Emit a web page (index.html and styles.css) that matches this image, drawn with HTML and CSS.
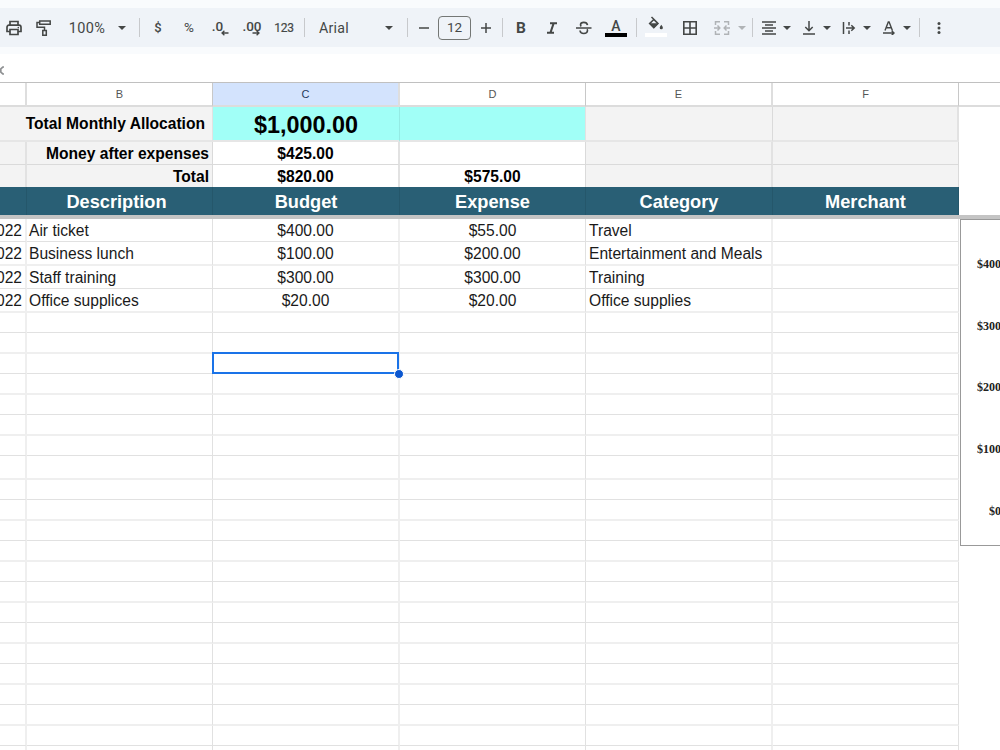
FILE: index.html
```
<!DOCTYPE html>
<html lang="en">
<head>
<meta charset="utf-8">
<title>Budget sheet</title>
<link rel="stylesheet" href="styles.css">
</head>
<body>
<div class="app">
  <header class="top">
    <div class="toolbar">
      <span class="tool w27"><svg width="18" height="18" viewBox="0 0 18 18"><path d="M5 6V2.500h8V6M5 12.500H2V8.300Q2 6.200 4 6.200h10q2 0 2 2.100v4.200h-3M5 10.500h8v5H5z" fill="none" stroke="#444746" stroke-width="1.700"/><circle cx="13.300" cy="8.600" r=".8" fill="#444746"/></svg></span>
      <span class="tool w34"><svg width="18" height="18" viewBox="0 0 18 18"><path d="M4.700 1.900h10.500v3.400H4.700zM4.700 3.600H2v4.700h7.500v3" fill="none" stroke="#444746" stroke-width="1.500"/><path d="M7.800 11.500h3.500v4.700H7.800z" fill="none" stroke="#444746" stroke-width="1.500"/></svg></span>
      <span class="tool w52 zoom">100%</span>
      <span class="tool w18"><i class="caret"></i></span>
      <span class="tool w16"><i class="sep"></i></span>
      <span class="tool w22 money">$</span>
      <span class="tool w40 pct">%</span>
      <span class="tool w22 dec">.0<svg class="below" width="8" height="6" viewBox="0 0 8 6"><path d="M7.500 3H1M3.400.7L1 3l2.400 2.300" fill="none" stroke="#444746" stroke-width="1.300"/></svg></span>
      <span class="tool w42 dec">.00<svg class="below far" width="8" height="6" viewBox="0 0 8 6"><path d="M.5 3H7M4.600.7L7 3 4.600 5.300" fill="none" stroke="#444746" stroke-width="1.300"/></svg></span>
      <span class="tool w22 num">123</span>
      <span class="tool w18"><i class="sep"></i></span>
      <span class="tool w42 fontname">Arial</span>
      <span class="tool w18 caret-far"><i class="caret"></i></span>
      <span class="tool w19"><i class="sep"></i></span>
      <span class="tool w14"><svg width="12" height="12"><path d="M1 6h10" stroke="#444746" stroke-width="1.500"/></svg></span>
      <span class="tool size">12</span>
      <span class="tool w16"><svg width="12" height="12"><path d="M1 6h10M6 1v10" stroke="#444746" stroke-width="1.500"/></svg></span>
      <span class="tool w17"><i class="sep"></i></span>
      <span class="tool w20 bold">B</span>
      <span class="tool w42"><svg width="12" height="14" viewBox="0 0 12 14"><path d="M4 2.200h7M1 11.800h7M7.700 2.200L4.400 11.800" fill="none" stroke="#444746" stroke-width="2"/></svg></span>
      <span class="tool w22"><svg width="18" height="16" viewBox="0 0 18 16"><path d="M1 8h15.500M12.500 5.200Q12 2.400 8.800 2.400T5.500 4.800q0 1 .8 1.600M5 10.500q.3 3 3.800 3t3.700-2.700q0-.9-.5-1.500" fill="none" stroke="#444746" stroke-width="1.600"/></svg></span>
      <span class="tool color-tool"><span class="letter">A</span><i class="swatch black"></i></span>
      <span class="tool w9"><i class="sep"></i></span>
      <span class="tool w30 fill-tool"><svg width="18" height="16" viewBox="0 0 18 16"><path d="M4.500 1l6.400 6.200M6.800 3.500L2.600 7.600l4.200 4.200 4.200-4.200z" fill="none" stroke="#444746" stroke-width="1.500"/><path d="M2.500 7.300h9l-4.700 5zM14.300 8.800q-1.600 2-1.600 2.900a1.600 1.600 0 0 0 3.200 0q0-.9-1.600-2.900z" fill="#444746"/></svg><i class="swatch white"></i></span>
      <span class="tool w37"><svg width="14" height="14"><path d="M.8.800h12.400v12.400H.8zM7 1v12M1 7h12" fill="none" stroke="#444746" stroke-width="1.600"/></svg></span>
      <span class="tool w28"><svg width="16" height="16" viewBox="0 0 16 16"><path d="M6 1.700H1.500V5M10 1.700h4.500V5M6 14.300H1.500V11M10 14.300h4.500V11M0 8h5.500M3.500 5.600L5.800 8l-2.300 2.400M16 8h-5.500M12.500 5.600L10.200 8l2.300 2.400" fill="none" stroke="#b0b3b6" stroke-width="1.500"/></svg></span>
      <span class="tool w12"><i class="caret faded"></i></span>
      <span class="tool w9"><i class="sep"></i></span>
      <span class="tool w24"><svg width="14" height="14"><path d="M0 1h14M3 4h8M0 7h14M3 10h8M0 13h14" stroke="#444746" stroke-width="1.500"/></svg></span>
      <span class="tool w12"><i class="caret"></i></span>
      <span class="tool w24 gap"><svg width="14" height="14"><path d="M1 13h12M7 0v9.500M3.300 6L7 9.700 10.700 6" fill="none" stroke="#444746" stroke-width="1.500"/></svg></span>
      <span class="tool w12"><i class="caret"></i></span>
      <span class="tool w24 gap"><svg width="14" height="14"><path d="M1.500 1v12M7 1v3.500M7 9.500V13M4 7h8M9.300 4.200L12.200 7 9.300 9.800" fill="none" stroke="#444746" stroke-width="1.500"/></svg></span>
      <span class="tool w12"><i class="caret"></i></span>
      <span class="tool w24 gap"><svg width="14" height="14"><path d="M3 9.500L6.300 1h.8l3.300 8.500M4.200 6.800h5M1 12h11M9.700 9.700L12 12l-2.300 2.300" fill="none" stroke="#444746" stroke-width="1.400"/></svg></span>
      <span class="tool w12"><i class="caret"></i></span>
      <span class="tool w13"><i class="sep"></i></span>
      <span class="tool w26"><svg width="4" height="14"><circle cx="2" cy="2.500" r="1.500" fill="#444746"/><circle cx="2" cy="7" r="1.500" fill="#444746"/><circle cx="2" cy="11.500" r="1.500" fill="#444746"/></svg></span>
    </div>
  </header>
  <div class="formula"><svg width="5" height="9" viewBox="0 0 5 9"><path d="M4 1H2.800L.8 2.800v3.400L2.800 8H4" fill="none" stroke="#8f9193" stroke-width="1.700"/></svg></div>
  <main class="sheet">
    <div class="row heads"><b></b><b>B</b><b class="on">C</b><b>D</b><b>E</b><b>F</b><b></b></div>
    <div class="row soft h35 summary first"><b class="merged">Total Monthly Allocation</b><b class="cyan big">$1,000.00</b><b class="cyan"></b><b></b><b></b></div>
    <div class="row h23 summary"><b></b><b class="end">Money after expenses</b><b class="clear">$425.00</b><b class="clear"></b><b></b><b></b></div>
    <div class="row h22 summary last"><b></b><b class="end">Total</b><b class="clear">$820.00</b><b class="clear">$575.00</b><b></b><b></b></div>
    <div class="row titles"><b></b><b class="desc">Description</b><b>Budget</b><b>Expense</b><b>Category</b><b>Merchant</b></div>
    <div class="freeze"></div>
    <div class="row h23 data"><b>022</b><b>Air ticket</b><b>$400.00</b><b>$55.00</b><b>Travel</b><b></b></div>
    <div class="row soft h24 data"><b>022</b><b>Business lunch</b><b>$100.00</b><b>$200.00</b><b>Entertainment and Meals</b><b></b></div>
    <div class="row h23 data"><b>022</b><b>Staff training</b><b>$300.00</b><b>$300.00</b><b>Training</b><b></b></div>
    <div class="row soft h24 data"><b>022</b><b>Office supplices</b><b>$20.00</b><b>$20.00</b><b>Office supplies</b><b></b></div>
    <div id="blank"></div>
    <div class="selection"><i></i></div>
    <aside class="chart"><span>$400</span><span>$300</span><span>$200</span><span>$100</span><span class="zero">$0</span></aside>
  </main>
</div>
<script src="rows.js"></script>
</body>
</html>
```
FILE: styles.css
```
* { box-sizing: border-box; }
body { margin: 0; background: #fff; font-family: "Liberation Sans", Arial, sans-serif; }
.app { width: 1000px; height: 750px; overflow: hidden; }
.top { height: 54px; padding: 8px 0 7px; background: #f9fbfd; }
.toolbar { display: flex; align-items: center; height: 39px; background: #eff3f8; color: #444746; font-family: Roboto, sans-serif; font-weight: 500; }
.tool { display: flex; align-items: center; justify-content: center; flex: none; height: 39px; position: relative; white-space: nowrap; }
.tool svg { display: block; flex: none; }
.w9 { width: 9px; } .w12 { width: 12px; } .w13 { width: 13px; } .w14 { width: 14px; }
.w16 { width: 16px; } .w17 { width: 17px; } .w18 { width: 18px; } .w19 { width: 19px; }
.w20 { width: 20px; } .w22 { width: 22px; } .w24 { width: 24px; } .w26 { width: 26px; }
.w27 { width: 27px; } .w28 { width: 28px; } .w30 { width: 30px; } .w34 { width: 34px; }
.w37 { width: 37px; } .w40 { width: 40px; } .w42 { width: 42px; } .w52 { width: 52px; }
.gap { margin-left: 4px; }
.caret-far { margin-left: 25px; }
.caret { border: 4px solid transparent; border-top-color: #444746; border-bottom: 0; }
.caret.faded { border-top-color: #b0b3b6; }
.sep { width: 1px; height: 19px; background: #c7c9cc; }
.zoom { font-size: 14.5px; font-weight: 400; letter-spacing: .4px; padding-top: 2px; }
.money { font-size: 13px; padding-bottom: 1px; }
.pct { font-size: 13.5px; font-weight: 400; padding-bottom: 1px; }
.dec { font-size: 13.5px; padding-bottom: 4px; }
.w22.dec { padding-right: 5px; }
.below { position: absolute; left: 12px; top: 22px; }
.below.far { left: 21px; }
.num { font-size: 12px; font-weight: 400; -webkit-text-stroke: .2px #444746; letter-spacing: -.3px; padding-bottom: 0; }
.fontname { font-size: 14.2px; font-weight: 400; letter-spacing: .3px; padding-top: 1px; }
.size { width: 33px; height: 24px; margin: 0 7px; border: 1px solid #747775; border-radius: 4px; font-size: 13.5px; font-weight: 400; padding-bottom: 1px; }
.bold { font-size: 15.500px; font-weight: 700; }
.color-tool { width: 32px; margin-left: 5px; }
.letter { font-size: 14px; padding-bottom: 4px; }
.swatch { position: absolute; left: 5px; bottom: 10px; width: 22px; height: 4px; }
.black { background: #000; }
.white { background: #fff; left: 4px; }
.fill-tool { padding-bottom: 8px; }
.formula { height: 28px; padding-top: 12px; }
.formula svg { display: block; }

.sheet { position: relative; height: 668px; }
.row { display: grid; grid-template-columns: 27px 186px 187px 186px 187px 186px 41px; height: 20px; }
.row > b { border: 0 solid #e1e1e1; border-right-width: 1px; border-bottom-width: 1px; display: flex; align-items: center; justify-content: center; font-weight: 400; font-size: 15.600px; overflow: hidden; white-space: nowrap; color: #000; }
.row > b:nth-child(odd) { border-right: 2px solid #efefef; }
.soft > b { border-bottom: 2px solid #efefef; }
.h22 { height: 22px; } .h23 { height: 23px; } .h24 { height: 24px; } .h35 { height: 35px; } .h21 { height: 21px; }
.row.heads { height: 25px; border-top: 1px solid #c0c0c0; }
.row.heads > b { font-size: 11px; color: #555; border-color: #c8c8c8; border-bottom: 2px solid #dcdcdc; }
.row.heads > b:nth-child(odd) { border-right-color: #dedede; }
.row.heads > b:last-child { border-right: 0; }
.row.heads > .on { background: #d3e3fd; color: #25395b; }
.summary > b { background: #f3f3f3; font-weight: 700; border-color: #dadada; padding-top: 1px; }
.row.summary > b:nth-child(odd) { border-right-color: #e2e2e2; }
.row.soft.summary > b { border-bottom-color: #e6e6e6; }
.summary.last > b { border-bottom: 0; padding-top: 2px; }
.summary > .clear { background: #fff; }
.row.summary > .cyan { background: #a1fff7; border-right: 1px solid #94ebe4; }
.summary > .merged { grid-column: 1 / 3; justify-content: flex-end; padding-right: 7px; }
.row.first > .merged { border-right: 1px solid #dadada; }
.summary > .end { justify-content: flex-end; padding-right: 3px; }
.summary > .big { font-size: 23.400px; padding-top: 3px; }
.row.titles { height: 28px; }
.row.titles > b { background: #295f75; color: #fff; border-right: 1px solid #25576b; border-bottom: 0; font-size: 18.200px; font-weight: 700; padding-top: 2px; }
.row.titles > .desc { padding-right: 6px; }
.freeze { height: 4px; background: #c4c4c4; }
.data > b { padding-top: 1px; color: #1a1a1a; }
.data.soft > b { padding-top: 2px; }
.data > b:nth-child(1) { justify-content: flex-end; padding-right: 3px; }
.data > b:nth-child(2) { justify-content: flex-start; padding-left: 2px; }
.data > b:nth-child(5) { justify-content: flex-start; padding-left: 3px; }
.selection { position: absolute; left: 212px; top: 270px; width: 187px; height: 22px; border: 2px solid #1a73e8; }
.selection i { position: absolute; right: -7px; bottom: -7px; width: 10px; height: 10px; border-radius: 50%; background: #0b57d0; border: 1px solid #fff; }
.chart { position: absolute; left: 960px; top: 137px; width: 60px; height: 327px; border: 1px solid #999; background: #fff; display: flex; flex-direction: column; padding: 14px 0 0 16px; font: 700 12px/61.700px "Liberation Serif", serif; color: #222; }
.zero { padding-left: 12px; }
```
FILE: rows.js
```
// Empty grid rows below the data; each entry is a row height in pixels.
const heights = [20, 21, 20, 21, 20, 21, 20, 24, 20, 21, 20, 21, 20, 21, 20, 21, 20, 21, 20, 21, 20, 21];
document.getElementById("blank").innerHTML = heights
  .map((h, i) => `<div class="row h${h}${i % 2 ? " soft" : ""}">${"<b></b>".repeat(6)}</div>`)
  .join("");
```
